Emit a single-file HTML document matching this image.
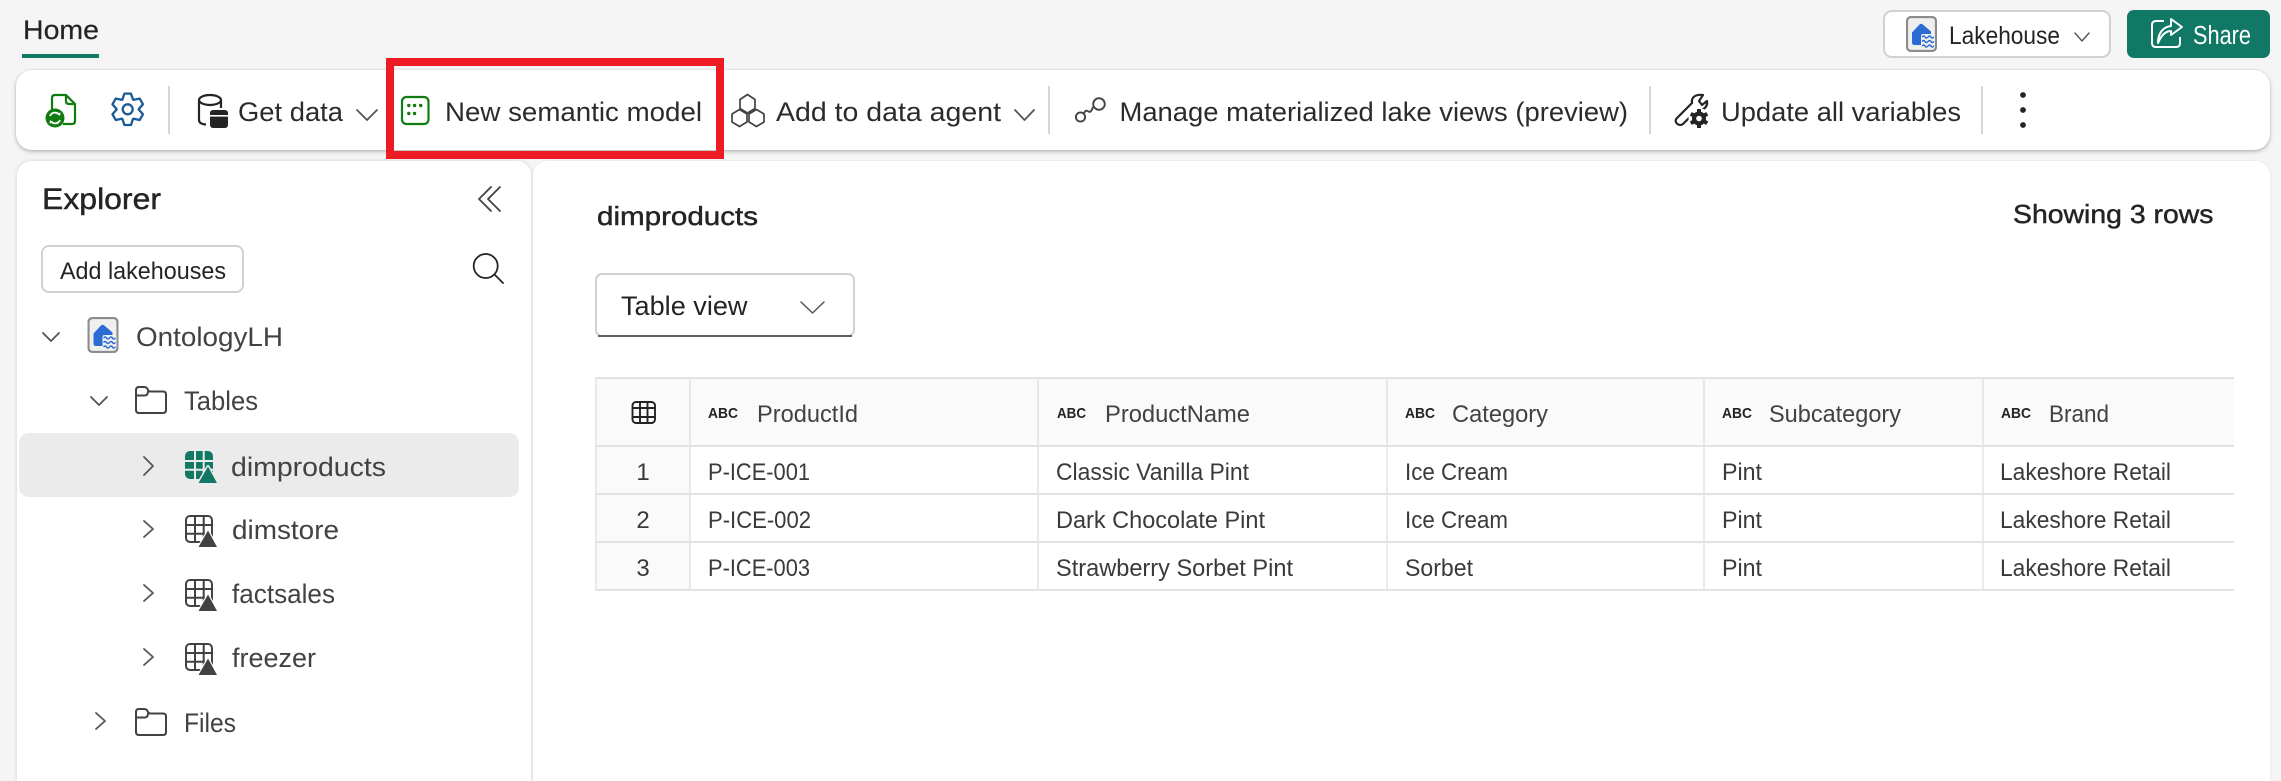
<!DOCTYPE html>
<html lang="en">
<head>
<meta charset="utf-8">
<title>Lakehouse - dimproducts</title>
<style>
html,body{margin:0;padding:0;width:2281px;height:768px;overflow:hidden;background:#f5f5f5}
.p{position:absolute;background:#fff}
#tb{left:16px;top:70px;width:2254px;height:80px;border-radius:16px;box-shadow:0 2px 4px rgba(0,0,0,.22),0 0 2px rgba(0,0,0,.12)}
#ex{left:17px;top:161px;width:514px;height:620px;border-radius:14px 14px 0 0;box-shadow:0 0 4px rgba(0,0,0,.14)}
#mn{left:533px;top:161px;width:1737px;height:620px;border-radius:14px 14px 0 0;box-shadow:0 0 2px rgba(0,0,0,.08)}
svg{position:absolute;left:0;top:0}
text{font-family:"Liberation Sans",sans-serif;fill:#242424}
.tr{font-size:27px;fill:#424242}
.tb{font-size:27px;fill:#2b2b2b}
.td{font-size:24px;fill:#3a3a3a}
.th{font-size:24px;fill:#424242}
.ab{font-size:15px;font-weight:bold;fill:#242424}
.sb{stroke:#242424;stroke-width:.45px}
.c{fill:none;stroke:#555;stroke-width:1.8;stroke-linecap:round;stroke-linejoin:round}
</style>
</head>
<body>
<div class="p" id="tb"></div>
<div class="p" id="ex"></div>
<div class="p" id="mn"></div>
<svg width="2281" height="768" viewBox="0 0 2281 768" xmlns="http://www.w3.org/2000/svg">
<defs>
<symbol id="lake" viewBox="0 0 31 36" width="31" height="36">
<rect x="1" y="1" width="29" height="34" rx="4" fill="#efefef" stroke="#8c8c8c" stroke-width="2.2"/>
<path d="M6 16.500 L13.500 8.500 Q15 7 16.800 8.500 L25 15.500 V22 H16 V29 H8.500 Q6 29 6 26.500Z" fill="#2b6cd4"/>
<rect x="15" y="18" width="14" height="14" rx="2" fill="#efefef"/>
<path d="M16 21 q2 -2 3 0 t3 0 t3 0 t3 0 M16 25.500 q2 -2 3 0 t3 0 t3 0 t3 0 M16 30 q2 -2 3 0 t3 0 t3 0 t3 0" fill="none" stroke="#2b6cd4" stroke-width="1.400"/>
</symbol>
<symbol id="folder" viewBox="0 0 32 28" width="32" height="28">
<path d="M1 24 V4 Q1 1 4 1 H9 Q12 1 13 4 Q13.600 5.500 15.500 5.500 H28 Q31 5.500 31 8.500 V24 Q31 27 28 27 H4 Q1 27 1 24Z M1 9.500 H10 Q13 9.500 13 5" fill="none" stroke="#424242" stroke-width="2"/>
</symbol>
<symbol id="tbl" viewBox="0 0 32 32" width="32" height="32">
<rect x="1" y="1" width="26" height="26" rx="4" fill="none" stroke="#424242" stroke-width="2"/>
<path d="M10 1 V27 M18.700 1 V27 M1 10 H27 M1 18.700 H27" stroke="#424242" stroke-width="2"/>
<path d="M23 15.500 L13.500 32 H32Z" fill="#424242" stroke="#fff" stroke-width="2.500" stroke-linejoin="round"/>
<path d="M23 15.500 L13.500 32 H32Z" fill="#424242"/>
</symbol>
<symbol id="tblg" viewBox="0 0 32 32" width="32" height="32">
<rect x="0" y="0" width="28" height="28" rx="5" fill="#117865"/>
<path d="M10 0 V28 M18.700 0 V28 M0 10 H28 M0 18.700 H28" stroke="#ebebeb" stroke-width="2"/>
<path d="M23 15.500 L13.500 32 H32Z" fill="#117865" stroke="#ebebeb" stroke-width="3" stroke-linejoin="round"/>
<path d="M23 15.500 L13.500 32 H32Z" fill="#117865"/>
</symbol>
</defs>

<!-- top bar -->
<text x="23" y="39" font-size="27" textLength="76" lengthAdjust="spacingAndGlyphs" class="sb" style="stroke-width:.2px">Home</text>
<rect x="22" y="54" width="77" height="4" fill="#117865"/>

<rect x="1884" y="11" width="226" height="46" rx="8" fill="#fff" stroke="#d1d1d1" stroke-width="2"/>
<use href="#lake" x="1906" y="16"/>
<text x="1949" y="44" font-size="25" textLength="111" lengthAdjust="spacingAndGlyphs">Lakehouse</text>
<path d="M2075 33 L2082 41 L2089 33" class="c" style="stroke-width:1.400"/>

<rect x="2127" y="10" width="143" height="48" rx="7" fill="#117865"/>
<path d="M2164 21 H2156 Q2152 21 2152 25 V43 Q2152 47 2156 47 H2176 Q2180 47 2180 43 V37" fill="none" stroke="#fff" stroke-width="2"/>
<path d="M2158 43 C2158 33 2163 27 2171 26 V19 L2182 27 L2171 35 V31 C2165 31 2161 36 2158 43Z" fill="none" stroke="#fff" stroke-width="2" stroke-linejoin="round"/>
<text x="2193" y="44" font-size="25.500" textLength="58" lengthAdjust="spacingAndGlyphs" style="fill:#fff">Share</text>

<!-- toolbar icons -->
<path d="M52 110 V98 Q52 95 55 95 H66 L75 104 V121 Q75 124 72 124 H63 M66 95 V101 Q66 104 69 104 H75" fill="none" stroke="#107c10" stroke-width="2.200" stroke-linejoin="round"/>
<circle cx="55" cy="118" r="9.500" fill="#107c10"/>
<path d="M50 116 Q52 111.500 57 113 L59 114.500 M60 120 Q58 124.500 53 123 L51 121.500" fill="none" stroke="#fff" stroke-width="1.800"/>
<path d="M57 113.500 L60 116 L60.500 112.500Z M53 122.500 L50 120 L49.500 123.500Z" fill="#fff"/>

<g transform="translate(127.700 109.300)" fill="none" stroke="#1a5a96" stroke-width="2.300" stroke-linejoin="round" stroke-linecap="round">
<path id="g0" d="M-5.200 -10 L-3.300 -15.700 H3.300 L5.200 -10 L5.800 -9.400"/>
<use href="#g0" transform="rotate(60)"/><use href="#g0" transform="rotate(120)"/><use href="#g0" transform="rotate(180)"/><use href="#g0" transform="rotate(240)"/><use href="#g0" transform="rotate(300)"/>
<circle r="5"/>
</g>
<rect x="168" y="86" width="2" height="48" fill="#d6d6d6"/>

<ellipse cx="210" cy="100" rx="11" ry="5" fill="none" stroke="#242424" stroke-width="2.200"/>
<path d="M199 100 V120 Q199 124 206 124.500 M221 100 V108" fill="none" stroke="#242424" stroke-width="2.200"/>
<rect x="210" y="110" width="18" height="18" rx="3" fill="#242424"/>
<rect x="210" y="115" width="18" height="1.600" fill="#fff"/>
<text x="238" y="121" class="tb" textLength="105" lengthAdjust="spacingAndGlyphs">Get data</text>
<path d="M357 110 L367 120 L377 110" class="c"/>

<rect x="402" y="97" width="26.500" height="27" rx="4.500" fill="none" stroke="#107c10" stroke-width="2.200"/>
<g fill="#107c10"><circle cx="408.800" cy="105.500" r="1.700"/><circle cx="414.600" cy="105.500" r="1.700"/><circle cx="420.700" cy="105.500" r="1.700"/><circle cx="408.800" cy="113.500" r="1.700"/><circle cx="414.600" cy="113.500" r="1.700"/></g>
<text x="445" y="121" class="tb" textLength="257" lengthAdjust="spacingAndGlyphs">New semantic model</text>

<g fill="none" stroke="#424242" stroke-width="1.700" stroke-linejoin="round">
<path d="M747.500 94.500 L755 99.500 V108.500 L747.500 113 L740 108.500 V99.500Z"/>
<path d="M739.500 109.500 L747 114 V122 L739.500 126.500 L732 122 V114Z"/>
<path d="M756.500 109.500 L764 114 V122 L756.500 126.500 L749 122 V114Z"/>
</g>
<text x="776" y="121" class="tb" textLength="225" lengthAdjust="spacingAndGlyphs">Add to data agent</text>
<path d="M1015 110 L1024.500 120 L1034 110" class="c"/>
<rect x="1048" y="86" width="2" height="48" fill="#d6d6d6"/>

<g fill="none" stroke="#424242" stroke-width="1.900"><circle cx="1080.500" cy="117" r="4.600"/><circle cx="1099" cy="104" r="5.800"/><path d="M1084 113 C1088 106 1089 118 1093 107"/></g>
<text x="1119.500" y="121" class="tb" textLength="508.500" lengthAdjust="spacingAndGlyphs">Manage materialized lake views (preview)</text>
<rect x="1649" y="86" width="2" height="48" fill="#d6d6d6"/>

<path d="M1692 103 C1691 97 1696 94 1703 95 L1699 101 L1702 105 L1707 101 C1708 107 1703 111 1697 110 L1683 124 C1679 127 1673 122 1677 118 Z" fill="#fff" stroke="#242424" stroke-width="2.200" stroke-linejoin="round"/>
<g transform="translate(1699 118.500)">
<circle r="10.500" fill="#fff"/>
<circle r="7" fill="#242424"/>
<g fill="#242424"><rect x="-2" y="-9.500" width="4" height="19"/><rect x="-2" y="-9.500" width="4" height="19" transform="rotate(60)"/><rect x="-2" y="-9.500" width="4" height="19" transform="rotate(120)"/></g>
<circle r="2.800" fill="#fff"/>
</g>
<text x="1721" y="121" class="tb" textLength="240" lengthAdjust="spacingAndGlyphs">Update all variables</text>
<rect x="1981" y="86" width="2" height="48" fill="#d6d6d6"/>
<g fill="#242424"><circle cx="2023" cy="95" r="2.900"/><circle cx="2023" cy="110" r="2.900"/><circle cx="2023" cy="125" r="2.900"/></g>

<!-- explorer -->
<text x="42" y="209" font-size="30" textLength="119" lengthAdjust="spacingAndGlyphs" class="sb">Explorer</text>
<path d="M491 187 L479 199 L491 211 M500 187 L488 199 L500 211" class="c" style="stroke:#424242"/>
<rect x="42" y="246" width="201" height="46" rx="7" fill="#fff" stroke="#d1d1d1" stroke-width="2"/>
<text x="60" y="279" font-size="24" textLength="166" lengthAdjust="spacingAndGlyphs">Add lakehouses</text>
<circle cx="485.700" cy="266" r="12" fill="none" stroke="#242424" stroke-width="1.800"/>
<path d="M494.500 274.500 L503 283" stroke="#242424" stroke-width="1.800" stroke-linecap="round"/>

<path d="M43 333 L51 341 L59 333" class="c"/>
<use href="#lake" x="87.500" y="317"/>
<text x="136" y="346" class="tr" textLength="147" lengthAdjust="spacingAndGlyphs">OntologyLH</text>

<path d="M91 397 L99 405 L107 397" class="c"/>
<use href="#folder" x="135" y="386"/>
<text x="184" y="410" class="tr" textLength="74" lengthAdjust="spacingAndGlyphs">Tables</text>

<rect x="19" y="433" width="500" height="64" rx="10" fill="#ebebeb"/>
<path d="M144 457 L153 466 L144 475" class="c"/>
<use href="#tblg" x="185" y="451"/>
<text x="231" y="476" class="tr" textLength="155" lengthAdjust="spacingAndGlyphs">dimproducts</text>

<path d="M144 521 L153 529 L144 537" class="c"/>
<use href="#tbl" x="185" y="515"/>
<text x="232" y="539" class="tr" textLength="107" lengthAdjust="spacingAndGlyphs">dimstore</text>

<path d="M144 585 L153 593 L144 601" class="c"/>
<use href="#tbl" x="185" y="579"/>
<text x="232" y="603" class="tr" textLength="103" lengthAdjust="spacingAndGlyphs">factsales</text>

<path d="M144 649 L153 657 L144 665" class="c"/>
<use href="#tbl" x="185" y="643"/>
<text x="232" y="667" class="tr" textLength="84" lengthAdjust="spacingAndGlyphs">freezer</text>

<path d="M96 713 L105 721 L96 729" class="c"/>
<use href="#folder" x="135" y="708"/>
<text x="184" y="732" class="tr" textLength="52" lengthAdjust="spacingAndGlyphs">Files</text>

<!-- main -->
<text x="597" y="225" font-size="26" textLength="161" lengthAdjust="spacingAndGlyphs" class="sb">dimproducts</text>
<text x="2013" y="223" font-size="26" textLength="200.500" lengthAdjust="spacingAndGlyphs" class="sb">Showing 3 rows</text>

<rect x="596" y="274" width="258" height="62" rx="6" fill="#fff" stroke="#d1d1d1" stroke-width="2"/>
<path d="M598 336 H852" stroke="#616161" stroke-width="2"/>
<text x="621" y="315" font-size="26.500" textLength="126.500" lengthAdjust="spacingAndGlyphs">Table view</text>
<path d="M801 302 L812.500 313 L824 302" class="c" style="stroke-width:1.500"/>

<!-- table -->
<rect x="596" y="378" width="1638" height="68" fill="#fafafa"/>
<rect x="596" y="446" width="94" height="144" fill="#fafafa"/>
<path d="M595 378 H2234 M595 446 H2234 M595 494 H2234 M595 542 H2234 M595 590 H2234" stroke="#e2e2e2" stroke-width="2"/>
<path d="M596 377 V591 M690 377 V591 M1038 377 V591 M1387 377 V591 M1704 377 V591 M1983 377 V591" stroke="#e4e4e4" stroke-width="1.600"/>
<g fill="none" stroke="#242424" stroke-width="1.900">
<rect x="632.500" y="402" width="22.500" height="21" rx="3.500"/>
<path d="M640 402 V423 M647.500 402 V423 M632.500 408 H655 M632.500 417 H655"/>
</g>

<text x="708" y="418" class="ab" textLength="30" lengthAdjust="spacingAndGlyphs">ABC</text>
<text x="757" y="422" class="th" textLength="101" lengthAdjust="spacingAndGlyphs">ProductId</text>
<text x="1057" y="418" class="ab" textLength="29" lengthAdjust="spacingAndGlyphs">ABC</text>
<text x="1105" y="422" class="th" textLength="145" lengthAdjust="spacingAndGlyphs">ProductName</text>
<text x="1405" y="418" class="ab" textLength="30" lengthAdjust="spacingAndGlyphs">ABC</text>
<text x="1452" y="422" class="th" textLength="96" lengthAdjust="spacingAndGlyphs">Category</text>
<text x="1722" y="418" class="ab" textLength="30" lengthAdjust="spacingAndGlyphs">ABC</text>
<text x="1769" y="422" class="th" textLength="132" lengthAdjust="spacingAndGlyphs">Subcategory</text>
<text x="2001" y="418" class="ab" textLength="30" lengthAdjust="spacingAndGlyphs">ABC</text>
<text x="2049" y="422" class="th" textLength="60" lengthAdjust="spacingAndGlyphs">Brand</text>

<text x="643" y="480" class="td" text-anchor="middle">1</text>
<text x="643" y="528" class="td" text-anchor="middle">2</text>
<text x="643" y="576" class="td" text-anchor="middle">3</text>

<text x="708" y="480" class="td" textLength="102" lengthAdjust="spacingAndGlyphs">P-ICE-001</text>
<text x="708" y="528" class="td" textLength="103" lengthAdjust="spacingAndGlyphs">P-ICE-002</text>
<text x="708" y="576" class="td" textLength="102" lengthAdjust="spacingAndGlyphs">P-ICE-003</text>

<text x="1056" y="480" class="td" textLength="193" lengthAdjust="spacingAndGlyphs">Classic Vanilla Pint</text>
<text x="1056" y="528" class="td" textLength="209" lengthAdjust="spacingAndGlyphs">Dark Chocolate Pint</text>
<text x="1056" y="576" class="td" textLength="237" lengthAdjust="spacingAndGlyphs">Strawberry Sorbet Pint</text>

<text x="1405" y="480" class="td" textLength="103" lengthAdjust="spacingAndGlyphs">Ice Cream</text>
<text x="1405" y="528" class="td" textLength="103" lengthAdjust="spacingAndGlyphs">Ice Cream</text>
<text x="1405" y="576" class="td" textLength="68" lengthAdjust="spacingAndGlyphs">Sorbet</text>

<text x="1722" y="480" class="td" textLength="40" lengthAdjust="spacingAndGlyphs">Pint</text>
<text x="1722" y="528" class="td" textLength="40" lengthAdjust="spacingAndGlyphs">Pint</text>
<text x="1722" y="576" class="td" textLength="40" lengthAdjust="spacingAndGlyphs">Pint</text>

<text x="2000" y="480" class="td" textLength="171" lengthAdjust="spacingAndGlyphs">Lakeshore Retail</text>
<text x="2000" y="528" class="td" textLength="171" lengthAdjust="spacingAndGlyphs">Lakeshore Retail</text>
<text x="2000" y="576" class="td" textLength="171" lengthAdjust="spacingAndGlyphs">Lakeshore Retail</text>

<!-- red highlight -->
<rect x="390" y="62" width="330" height="93" fill="none" stroke="#ed1c24" stroke-width="8"/>
</svg>
</body>
</html>
